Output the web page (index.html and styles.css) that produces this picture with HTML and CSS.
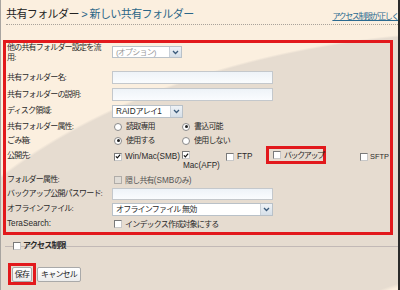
FILE: index.html
```html
<!DOCTYPE html>
<html lang="ja">
<head>
<meta charset="utf-8">
<link rel="stylesheet" href="styles.css">
</head>
<body>
<div class="frame">
  <div class="header">
    <div class="title"><span class="crumb">共有フォルダー</span><span class="sep"> &gt; </span><span class="current">新しい共有フォルダー</span></div>
    <a class="help" href="#">アクセス制限が正しく</a>
  </div>
  <div class="form-box">
    <div class="row r1">
      <div class="label">他の共有フォルダー設定を流用:</div>
      <div class="ctrl"><div class="select s-opt"><span class="val grey">(オプション)</span><span class="arrow"><svg width="7" height="5" viewBox="0 0 7 5"><path d="M1 1 L3.5 3.5 L6 1" fill="none" stroke="#3a5a7a" stroke-width="1.3"/></svg></span></div></div>
    </div>
    <div class="row r2">
      <div class="label">共有フォルダー名:</div>
      <div class="ctrl"><div class="input"></div></div>
    </div>
    <div class="row r3">
      <div class="label">共有フォルダーの説明:</div>
      <div class="ctrl"><div class="input"></div></div>
    </div>
    <div class="row r4">
      <div class="label">ディスク領域:</div>
      <div class="ctrl"><div class="select s-raid"><span class="val"><span class="lat">RAID</span>アレイ<span class="lat">1</span></span><span class="arrow"><svg width="7" height="5" viewBox="0 0 7 5"><path d="M1 1 L3.5 3.5 L6 1" fill="none" stroke="#3a5a7a" stroke-width="1.3"/></svg></span></div></div>
    </div>
    <div class="row r5">
      <div class="label">共有フォルダー属性:</div>
      <div class="ctrl">
        <span class="opt w68"><span class="radio"></span>読取専用</span>
        <span class="opt"><span class="radio on"></span>書込可能</span>
      </div>
    </div>
    <div class="row r6">
      <div class="label">ごみ箱:</div>
      <div class="ctrl">
        <span class="opt w68"><span class="radio on"></span>使用する</span>
        <span class="opt"><span class="radio"></span>使用しない</span>
      </div>
    </div>
    <div class="row r7">
      <div class="label">公開先:</div>
      <div class="ctrl top">
        <span class="opt w68"><span class="cb on"><svg width="7" height="7" viewBox="0 0 7 7"><path d="M1 3.3 L2.8 5.2 L6 1.4" fill="none" stroke="#111" stroke-width="1.4"/></svg></span><span class="lat">Win/Mac(SMB)</span></span>
        <span class="opt afp"><span class="cb on"><svg width="7" height="7" viewBox="0 0 7 7"><path d="M1 3.3 L2.8 5.2 L6 1.4" fill="none" stroke="#111" stroke-width="1.4"/></svg></span><span class="afp-text lat">Mac(AFP)</span></span>
        <span class="opt w40"><span class="cb"></span><span class="lat">FTP</span></span>
        <span class="opt hl"><span class="cb"></span><span class="tight">バックアップ</span></span>
        <span class="opt sftp"><span class="cb"></span><span class="lat small">SFTP</span></span>
      </div>
    </div>
    <div class="row r8">
      <div class="label">フォルダー属性:</div>
      <div class="ctrl">
        <span class="opt dis"><span class="cb off"></span>隠し共有<span class="lat">(SMB</span>のみ<span class="lat">)</span></span>
      </div>
    </div>
    <div class="row r9">
      <div class="label">バックアップ公開パスワード:</div>
      <div class="ctrl"><div class="input pw"></div></div>
    </div>
    <div class="row r10">
      <div class="label">オフラインファイル:</div>
      <div class="ctrl"><div class="select s-off"><span class="val">オフラインファイル 無効</span><span class="arrow"><svg width="7" height="5" viewBox="0 0 7 5"><path d="M1 1 L3.5 3.5 L6 1" fill="none" stroke="#3a5a7a" stroke-width="1.3"/></svg></span></div></div>
    </div>
    <div class="row r11">
      <div class="label"><span class="lat">TeraSearch:</span></div>
      <div class="ctrl">
        <span class="opt"><span class="cb"></span>インデックス作成対象にする</span>
      </div>
    </div>
  </div>
  <div class="fieldset">
    <span class="legend"><span class="cb"></span>アクセス制限</span>
  </div>
  <div class="buttons">
    <span class="hlbtn"><span class="btn">保存</span></span>
    <span class="btn">キャンセル</span>
  </div>
</div>
</body>
</html>
```

FILE: styles.css
```css
html, body {
  margin: 0;
  padding: 0;
}
body {
  width: 400px;
  height: 290px;
  overflow: hidden;
  font-family: "Liberation Sans", "Noto Sans CJK JP", sans-serif;
  font-size: 8px;
  letter-spacing: -0.8px;
  color: #2a2a2a;
}
.lat { letter-spacing: 0; font-size: 8.2px; }
.lat.small { font-size: 7.4px; }
.tight { letter-spacing: -1.4px; }
.frame {
  box-sizing: border-box;
  width: 400px;
  height: 290px;
  border-left: 1px solid #a8a4a0;
  border-right: 2px solid #2a2a2a;
  background:
    radial-gradient(630px 370px at 500px 400px, #fbefdf 0, #fbefdf 34.5%, #e6dcd0 35.5%, #e6dcd0 99.4%, #fbefdf 100%);
  overflow: hidden;
}
.header {
  display: flex;
  justify-content: space-between;
  align-items: flex-start;
  height: 17px;
  margin: 0 0 0 5px;
  padding-top: 7px;
  border-bottom: 1px dotted #a9a39b;
}
.title {
  font-size: 11px;
  letter-spacing: -0.6px;
  line-height: 14px;
  white-space: nowrap;
}
.crumb { color: #222; }
.sep { color: #2b6687; }
.current { color: #2b6687; }
.help {
  font-size: 8px;
  letter-spacing: -1.4px;
  line-height: 10px;
  margin-top: 5px;
  color: #2b6a90;
  text-decoration: underline;
  white-space: nowrap;
}
.form-box {
  box-sizing: border-box;
  width: 390px;
  margin: 15px 0 0 2px;
  border: 3px solid #e2191c;
  padding: 0 0 1px 1px;
}
.row {
  display: flex;
  align-items: center;
}
.label {
  width: 105px;
  flex-shrink: 0;
  line-height: 10px;
  white-space: nowrap;
}
.ctrl {
  display: flex;
  align-items: center;
  flex-shrink: 0;
}
.ctrl.top { align-items: flex-start; }
.r1 { height: 26px; align-items: flex-start; }
.r1 .label { white-space: normal; width: 100px; margin-right: 5px; }
.r1 .ctrl { margin-top: 3px; }
.r2, .r3 { height: 17px; }
.r4 { height: 16px; }
.r5 { height: 15px; }
.r6 { height: 13px; }
.r7 { height: 26px; align-items: flex-start; }
.r7 .label { margin-top: 4px; }
.r7 .ctrl { margin-top: -1px; }
.r8 { height: 14px; }
.r9 { height: 14px; }
.r10 { height: 16px; }
.r11 { height: 14px; }

.input {
  box-sizing: border-box;
  width: 161px;
  height: 13px;
  border: 1px solid #c4c8cc;
  background: linear-gradient(#eef3f8, #fafcfe);
}
.input.pw { height: 12px; }
.select {
  box-sizing: border-box;
  display: flex;
  align-items: center;
  justify-content: space-between;
  height: 13px;
  border: 1px solid #b9c1c8;
  background: #fff;
  line-height: 11px;
}
.s-opt { width: 70px; height: 12px; }
.s-raid { width: 71px; }
.s-off { width: 161px; }
.val { padding-left: 3px; white-space: nowrap; }
.val.grey { color: #9a9a9a; }
.arrow {
  box-sizing: border-box;
  width: 12px;
  height: 100%;
  flex-shrink: 0;
  display: flex;
  align-items: center;
  justify-content: center;
  background: linear-gradient(#eef2f6, #d6dfe8);
  border-left: 1px solid #c8d0d8;
}

.opt {
  display: inline-flex;
  align-items: center;
  white-space: nowrap;
  line-height: 11px;
}
.w68 { width: 68px; margin-left: 2px; }
.w40 { width: 40px; margin-top: 5px; }
.radio {
  box-sizing: border-box;
  flex-shrink: 0;
  width: 8px;
  height: 8px;
  border-radius: 50%;
  border: 1px solid #8a8a8a;
  background: #fff;
  margin-right: 4px;
  position: relative;
}
.radio.on::after {
  content: "";
  position: absolute;
  left: 1.5px;
  top: 1.5px;
  width: 3px;
  height: 3px;
  border-radius: 50%;
  background: #222;
}
.cb {
  box-sizing: border-box;
  flex-shrink: 0;
  width: 8px;
  height: 8px;
  border: 1px solid #7a7a7a;
  border-right-color: #c8c8c8;
  border-bottom-color: #c8c8c8;
  background: #fff;
  margin-right: 3px;
  display: inline-flex;
  align-items: center;
  justify-content: center;
}
.cb svg { display: block; }
.cb.off { background: #e0dcd6; border-color: #b0aca8; }
.dis { color: #555; margin-left: 2px; }
.r11 .opt { margin-left: 2px; }
.r7 .w68 { margin-top: 5px; }
.afp {
  width: 44px;
  flex-direction: column;
  align-items: flex-start;
  margin-top: 5px;
}
.afp-text { margin-left: 1px; margin-top: 1px; }
.hl {
  box-sizing: border-box;
  width: 60px;
  height: 18px;
  border: 3px solid #e2191c;
  padding-left: 4px;
}
.sftp { margin-left: 34px; margin-top: 5px; }
.sftp .cb { margin-right: 2px; }

.fieldset {
  margin: 11px 0 0 4px;
  height: 1px;
  background: #c2b9b6;
  position: relative;
}
.legend {
  position: absolute;
  left: 8px;
  top: -5px;
  display: inline-flex;
  align-items: center;
  line-height: 10px;
  font-weight: bold;
  padding-right: 2px;
}
.legend .cb { margin-right: 2px; }
.buttons {
  display: flex;
  align-items: center;
  margin: 16px 0 0 7px;
}
.hlbtn {
  box-sizing: border-box;
  display: inline-flex;
  align-items: center;
  justify-content: center;
  width: 28px;
  height: 22px;
  border: 3px solid #e2191c;
  margin-right: 1px;
}
.btn {
  box-sizing: border-box;
  display: inline-flex;
  align-items: center;
  justify-content: center;
  height: 15px;
  padding: 0 3px;
  border: 1px solid #a9a9a9;
  border-radius: 2px;
  background: linear-gradient(#ffffff, #ececec);
  line-height: 11px;
  color: #222;
}
.hlbtn .btn { width: 20px; padding: 0; }
```
